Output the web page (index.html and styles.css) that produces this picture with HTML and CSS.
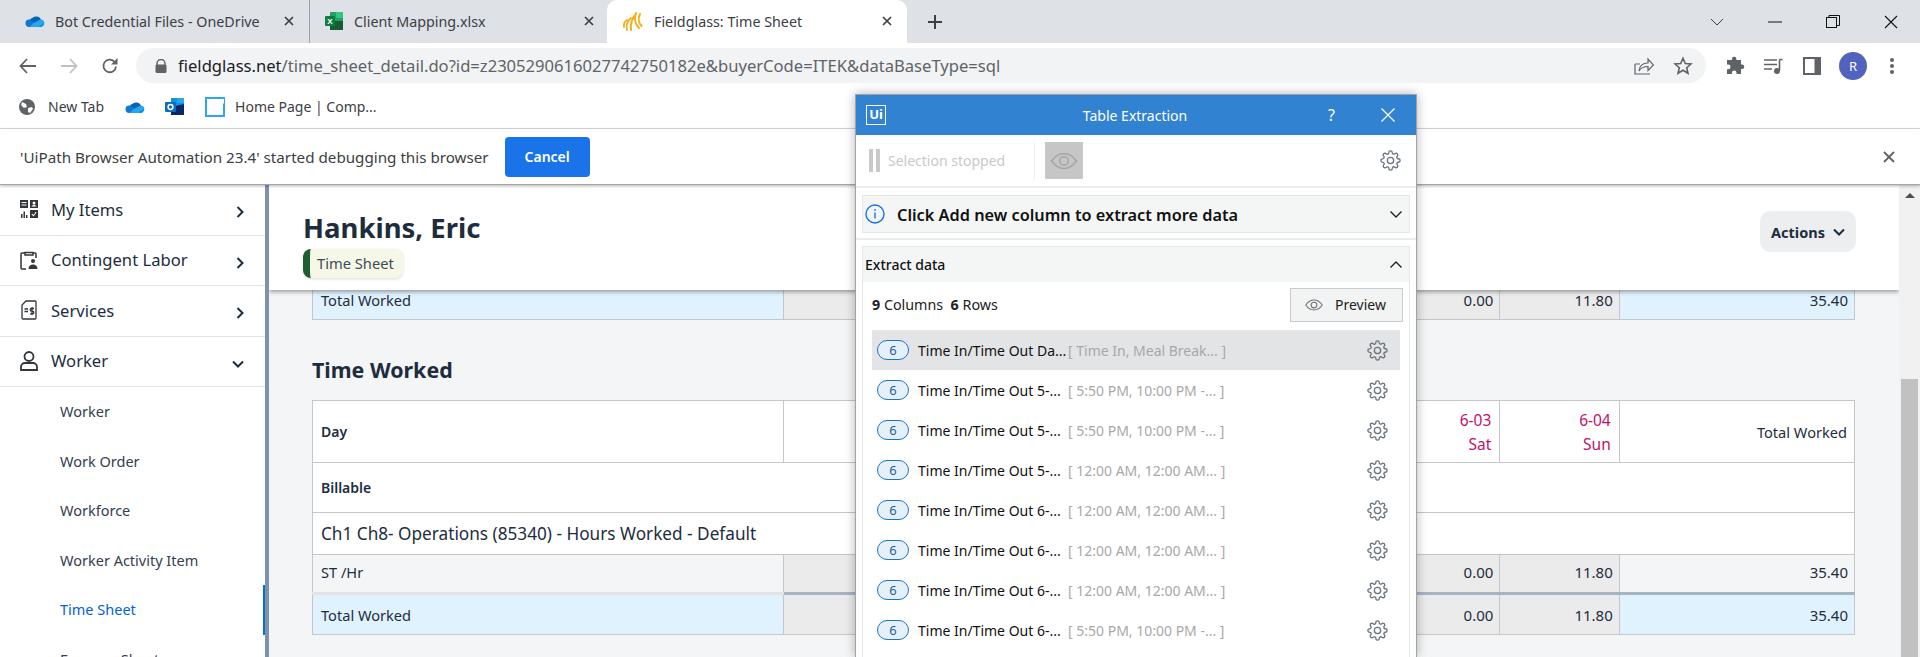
FILE: index.html
```html
<!DOCTYPE html>
<html lang="en">
<head>
    <meta charset="UTF-8">
    <meta name="viewport" content="width=device-width, initial-scale=1.0">
    <title>Fieldglass: Time Sheet</title>
    <link rel="stylesheet" href="styles.css">
</head>
<body>
    <svg class="sprite" width="0" height="0">
        <symbol id="gear" viewBox="0 0 24 24">
            <circle cx="12" cy="12" r="3.6" fill="none" stroke="currentColor" stroke-width="1.5"/>
            <path fill="none" stroke="currentColor" stroke-width="1.5" d="M19.4 15a1.65 1.65 0 0 0 .33 1.82l.06.06a2 2 0 0 1 0 2.83 2 2 0 0 1-2.83 0l-.06-.06a1.65 1.65 0 0 0-1.82-.33 1.65 1.65 0 0 0-1 1.51V21a2 2 0 0 1-2 2 2 2 0 0 1-2-2v-.09A1.65 1.65 0 0 0 9 19.4a1.65 1.65 0 0 0-1.82.33l-.06.06a2 2 0 0 1-2.83 0 2 2 0 0 1 0-2.83l.06-.06a1.65 1.65 0 0 0 .33-1.82 1.65 1.65 0 0 0-1.51-1H3a2 2 0 0 1-2-2 2 2 0 0 1 2-2h.09A1.65 1.65 0 0 0 4.6 9a1.65 1.65 0 0 0-.33-1.82l-.06-.06a2 2 0 0 1 0-2.83 2 2 0 0 1 2.83 0l.06.06a1.65 1.65 0 0 0 1.82.33H9a1.65 1.65 0 0 0 1-1.51V3a2 2 0 0 1 2-2 2 2 0 0 1 2 2v.09a1.65 1.65 0 0 0 1 1.51 1.65 1.65 0 0 0 1.82-.33l.06-.06a2 2 0 0 1 2.83 0 2 2 0 0 1 0 2.83l-.06.06a1.65 1.65 0 0 0-.33 1.82V9a1.65 1.65 0 0 0 1.51 1H21a2 2 0 0 1 2 2 2 2 0 0 1-2 2h-.09a1.65 1.65 0 0 0-1.51 1z"/>
        </symbol>
        <symbol id="eye" viewBox="0 0 24 16">
            <path fill="none" stroke="currentColor" stroke-width="1.4" d="M1 8c3-4.4 6.800-6.600 11-6.600S20 3.600 23 8c-3 4.400-6.800 6.600-11 6.600S4 12.400 1 8z"/>
            <circle cx="12" cy="8" r="3.800" fill="none" stroke="currentColor" stroke-width="1.4"/>
        </symbol>
        <symbol id="cloud" viewBox="0 0 20 14">
            <path fill="#0364b8" d="M7.700 3.800A5.200 5.200 0 0 1 16 5.600L9 9.500 4.500 6.800a4 4 0 0 1 3.200-3z"/>
            <path fill="#0f78d4" d="M4.500 5.500l5 3 3.500 4.500H4a3.800 3.800 0 0 1-.5-7.500z"/>
            <path fill="#1490df" d="M15.700 5.400A3.900 3.900 0 0 1 16.500 13H9.500L8 10.500l7.700-5.100z"/>
            <path fill="#28a8ea" d="M8.500 9.200l7-3.400c1.800.2 3.200 1 4 2.700L13 13H4.500z"/>
        </symbol>
        <symbol id="tab-x" viewBox="0 0 10 10">
            <path d="M1 1l8 8M9 1L1 9" stroke="#3c4043" stroke-width="1.700"/>
        </symbol>
    </svg>

    <div class="tabstrip">
        <div class="tab tab-first">
            <svg class="favicon" width="20" height="14"><use href="#cloud"/></svg>
            <span class="tab-title">Bot Credential Files - OneDrive</span>
            <svg width="10" height="10"><use href="#tab-x"/></svg>
        </div>
        <div class="tab tab-second">
            <svg class="favicon" width="20" height="20" viewBox="0 0 20 20">
                <rect x="6" y="1" width="13" height="18" rx="1" fill="#21a366"/>
                <rect x="12" y="1" width="7" height="6" fill="#33c481"/>
                <rect x="6" y="10" width="13" height="9" fill="#185c37"/>
                <rect x="1" y="5" width="10" height="10" rx="1" fill="#107c41"/>
                <text x="3.200" y="13" class="xl-mark">X</text>
            </svg>
            <span class="tab-title">Client Mapping.xlsx</span>
            <svg width="10" height="10"><use href="#tab-x"/></svg>
        </div>
        <div class="tab tab-active">
            <svg class="favicon" width="22" height="22" viewBox="0 0 22 22" fill="none" stroke="#f5ae17" stroke-linecap="round">
                <path stroke-width="1.800" d="M2 17c-.5-3 .5-5.500 3-7M5 20c-1-4 .5-9 4-12"/>
                <path stroke-width="2" d="M9 20C8 15 10 8 14 4M14 3c-2 5-1 11 3 15M18 4c-2 4-1.500 9 1.500 12"/>
            </svg>
            <span class="tab-title">Fieldglass: Time Sheet</span>
            <svg width="10" height="10"><use href="#tab-x"/></svg>
        </div>
        <svg class="newtab" width="16" height="16" viewBox="0 0 16 16"><path d="M8 1v14M1 8h14" stroke="#3c4043" stroke-width="2"/></svg>
        <div class="window-controls">
            <svg width="14" height="8" viewBox="0 0 14 8"><path d="M1 1l6 6 6-6" fill="none" stroke="#3c4043"/></svg>
            <svg width="14" height="2" viewBox="0 0 14 2"><path d="M0 1h14" stroke="#111" stroke-width="1"/></svg>
            <svg width="14" height="14" viewBox="0 0 14 14" fill="none" stroke="#111"><rect x="0.500" y="2.500" width="10" height="10"/><path d="M3 2.500V.5h10.500v10h-3"/></svg>
            <svg width="14" height="14" viewBox="0 0 14 14"><path d="M1 1l12 12M13 1L1 13" stroke="#111" stroke-width="1.100"/></svg>
        </div>
    </div>

    <div class="toolbar">
        <svg class="nav-icon" width="18" height="16" viewBox="0 0 18 16"><path d="M8 1L1.500 8 8 15M2 8h15" fill="none" stroke="#5f6368" stroke-width="1.800"/></svg>
        <svg class="nav-icon" width="18" height="16" viewBox="0 0 18 16"><path d="M10 1l6.500 7L10 15M16 8H1" fill="none" stroke="#bdc1c6" stroke-width="1.800"/></svg>
        <svg class="nav-icon" width="18" height="18" viewBox="0 0 18 18"><path d="M15 9.500a6.300 6.300 0 1 1-1.800-5" fill="none" stroke="#5f6368" stroke-width="1.800"/><path d="M16.500 1v6.500H10z" fill="#5f6368"/></svg>
        <div class="omnibox">
            <svg class="lock" width="12" height="14" viewBox="0 0 12 14"><path d="M2 6V4.500a4 4 0 0 1 8 0V6" fill="none" stroke="#5f6368" stroke-width="1.500"/><rect x="0.500" y="5.500" width="11" height="8.500" rx="1.500" fill="#5f6368"/></svg>
            <span class="url"><b>fieldglass.net</b>/time_sheet_detail.do?id=z2305290616027742750182e&amp;buyerCode=ITEK&amp;dataBaseType=sql</span>
            <svg class="omni-icon" width="20" height="20" viewBox="0 0 20 20" fill="none" stroke="#5f6368" stroke-width="1.200"><path d="M1 8v10h15M1 8h5"/><path d="M5 15c.5-5 4-8 9-8V3l5.500 6-5.500 5.500v-4c-4 0-7 1-9 4.500z"/></svg>
            <svg class="omni-icon" width="20" height="20" viewBox="0 0 20 20"><path d="M10 2.300l2.300 5.200 5.700.5-4.300 3.700 1.300 5.600-5-3-5 3 1.300-5.600L2 8l5.700-.5z" fill="none" stroke="#5f6368" stroke-width="1.600"/></svg>
        </div>
        <svg class="ext-icon" width="20" height="20" viewBox="0 0 20 20"><path d="M7 3a2.200 2.200 0 0 1 4.400 0v1H16v4.500h1a2.300 2.300 0 0 1 0 4.600h-1V18h-4.500v-1.200a2.300 2.300 0 0 0-4.600 0V18H2v-4.800h1.200a2.300 2.300 0 0 0 0-4.600H2V4h5z" fill="#5f6368"/></svg>
        <svg class="ext-icon" width="20" height="16" viewBox="0 0 20 16"><path d="M0 2h13M0 6.500h13M0 11h8" stroke="#5f6368" stroke-width="1.500"/><path d="M15.500 1.500h3M15.500 1.500v11" stroke="#5f6368" stroke-width="1.600" fill="none"/><circle cx="13" cy="13" r="3" fill="#5f6368"/></svg>
        <svg class="ext-icon" width="18" height="18" viewBox="0 0 18 18"><rect width="18" height="18" fill="#5f6368"/><rect x="2" y="2" width="9.500" height="14" fill="#fff"/></svg>
        <span class="avatar">R</span>
        <svg class="menu-icon" width="6" height="18" viewBox="0 0 6 18"><circle cx="3" cy="3" r="2" fill="#5f6368"/><circle cx="3" cy="9" r="2" fill="#5f6368"/><circle cx="3" cy="15" r="2" fill="#5f6368"/></svg>
    </div>

    <div class="bookmarks">
        <svg width="16" height="16" viewBox="0 0 16 16"><circle cx="8" cy="8" r="8" fill="#5f6368"/><path d="M3 3l4 2 1 3-3 1-3-3zM9 9l4-1 1 2-3 4-2-1z" fill="#fff"/></svg>
        <span class="bm-label">New Tab</span>
        <svg class="bm-icon" width="20" height="14"><use href="#cloud"/></svg>
        <svg class="bm-icon" width="20" height="18" viewBox="0 0 20 18">
            <rect x="6" y="0" width="13" height="17" fill="#1490df"/>
            <rect x="12" y="0" width="7" height="5" fill="#28a8ea"/>
            <path d="M6 9l13-3v11H6z" fill="#0a2767"/>
            <rect x="0" y="4" width="11" height="10" rx="1" fill="#0f6cbd"/>
            <circle cx="5.500" cy="9" r="2.400" fill="none" stroke="#fff" stroke-width="1.500"/>
        </svg>
        <svg class="bm-icon" width="20" height="20" viewBox="0 0 20 20"><path d="M1 1h18v18H1z" fill="#fff" stroke="#29a8ea" stroke-width="2"/><path d="M14 2l5 0v5z" fill="#fff"/></svg>
        <span class="bm-label bm-home">Home Page | Comp...</span>
    </div>

    <div class="infobar">
        <span class="info-text">'UiPath Browser Automation 23.4' started debugging this browser</span>
        <button class="cancel-btn">Cancel</button>
        <svg class="info-close" width="12" height="12" viewBox="0 0 12 12"><path d="M1 1l10 10M11 1L1 11" stroke="#5f6368" stroke-width="1.800"/></svg>
    </div>

    <div class="app">
        <nav class="sidebar">
            <div class="nav-item">
                <svg class="nav-glyph" width="18" height="18" viewBox="0 0 18 18" fill="#32363a">
                    <path d="M0 0h8v8H0zM1.500 2v1h5V2zm0 2.500v1h5v-1zM10 0h8v8h-8zm4 1.500a1.500 1.500 0 1 0 0 3 1.500 1.500 0 0 0 0-3zM11.500 6.500h5C16.200 5.500 15.200 5 14 5s-2.200.5-2.500 1.500zM1 14h1.500v4H1zM3.500 11.500H5V18H3.500zM6 15h1.500v3H6zM10 10h8v8h-8zm5.800 1.800L13.500 15l-1.300-1.200-.7.800 2 1.900 3-4z"/>
                </svg>
                <span class="nav-label">My Items</span>
                <svg class="chev" width="8" height="12" viewBox="0 0 8 12"><path d="M1.500 1l5 5-5 5" fill="none" stroke="#1d2d3e" stroke-width="2"/></svg>
            </div>
            <div class="nav-item">
                <svg class="nav-glyph" width="18" height="20" viewBox="0 0 18 20" fill="none" stroke="#32363a" stroke-width="1.500">
                    <path d="M5 3H2a1 1 0 0 0-1 1v14a1 1 0 0 0 1 1h4M13 3h2a1 1 0 0 1 1 1v4M5 2.500h8V5H5z"/>
                    <circle cx="13" cy="11" r="2" fill="#32363a" stroke="none"/>
                    <path d="M8.500 19c0-3 2-4.500 4.500-4.500s4.500 1.500 4.500 4.500z" fill="#32363a" stroke="none"/>
                </svg>
                <span class="nav-label">Contingent Labor</span>
                <svg class="chev" width="8" height="12" viewBox="0 0 8 12"><path d="M1.500 1l5 5-5 5" fill="none" stroke="#1d2d3e" stroke-width="2"/></svg>
            </div>
            <div class="nav-item">
                <svg class="nav-glyph" width="16" height="20" viewBox="0 0 16 20" fill="none" stroke="#32363a" stroke-width="1.300">
                    <path d="M5 1h9a1 1 0 0 1 1 1v16a1 1 0 0 1-1 1H2a1 1 0 0 1-1-1V5z"/>
                    <path d="M3.500 9h3.500M3.500 11.500h3.500M11 7v8M13 8.500h-2.500a1.300 1.300 0 0 0 0 2.700h1a1.300 1.300 0 0 1 0 2.600H9"/>
                </svg>
                <span class="nav-label">Services</span>
                <svg class="chev" width="8" height="12" viewBox="0 0 8 12"><path d="M1.500 1l5 5-5 5" fill="none" stroke="#1d2d3e" stroke-width="2"/></svg>
            </div>
            <div class="nav-item">
                <svg class="nav-glyph" width="18" height="20" viewBox="0 0 18 20" fill="none" stroke="#32363a" stroke-width="1.800">
                    <circle cx="9" cy="5.500" r="4.500"/>
                    <path d="M1 19v-3a4 4 0 0 1 4-4h8a4 4 0 0 1 4 4v3z"/>
                </svg>
                <span class="nav-label">Worker</span>
                <svg class="chev-down" width="12" height="8" viewBox="0 0 12 8"><path d="M1 1.500l5 5 5-5" fill="none" stroke="#1d2d3e" stroke-width="2"/></svg>
            </div>
            <a class="sub-item">Worker</a>
            <a class="sub-item">Work Order</a>
            <a class="sub-item">Workforce</a>
            <a class="sub-item">Worker Activity Item</a>
            <a class="sub-item active">Time Sheet</a>
            <a class="sub-item">Expense Sheet</a>
        </nav>

        <main class="main">
            <header class="page-header">
                <div>
                    <h1>Hankins, Eric</h1>
                    <span class="chip">Time Sheet</span>
                </div>
                <button class="actions-btn">Actions
                    <svg width="12" height="8" viewBox="0 0 12 8"><path d="M1 1.500l5 5 5-5" fill="none" stroke="#1d2d3e" stroke-width="2"/></svg>
                </button>
            </header>

            <div class="content">
                <table class="grid">
                    <colgroup><col class="col-label"><col class="col-day"><col class="col-day"><col class="col-day"><col class="col-day"><col class="col-day"><col class="col-day"><col class="col-day"><col></colgroup>
                    <tr class="row-clipped">
                        <td class="label blue">Total Worked</td>
                        <td class="grey"></td><td class="grey"></td><td class="grey"></td><td class="grey"></td><td class="grey"></td>
                        <td class="grey num">0.00</td><td class="grey num">11.80</td><td class="blue num">35.40</td>
                    </tr>
                </table>

                <h2>Time Worked</h2>

                <table class="grid">
                    <colgroup><col class="col-label"><col class="col-day"><col class="col-day"><col class="col-day"><col class="col-day"><col class="col-day"><col class="col-day"><col class="col-day"><col></colgroup>
                    <tr class="row-day">
                        <th class="label">Day</th>
                        <td></td><td></td><td></td><td></td><td></td>
                        <td class="date">6-03<br>Sat</td>
                        <td class="date">6-04<br>Sun</td>
                        <td class="total-head">Total Worked</td>
                    </tr>
                    <tr class="row-section"><th class="label" colspan="9">Billable</th></tr>
                    <tr class="row-task"><td class="label task" colspan="9">Ch1 Ch8- Operations (85340) - Hours Worked - Default</td></tr>
                    <tr class="row-st">
                        <td class="label plain">ST /Hr</td>
                        <td class="grey"></td><td class="grey"></td><td class="grey"></td><td class="grey"></td><td class="grey"></td>
                        <td class="grey num">0.00</td><td class="grey num">11.80</td><td class="plain num">35.40</td>
                    </tr>
                    <tr class="row-total">
                        <td class="label blue">Total Worked</td>
                        <td class="grey"></td><td class="grey"></td><td class="grey"></td><td class="grey"></td><td class="grey"></td>
                        <td class="grey num">0.00</td><td class="grey num">11.80</td><td class="blue num">35.40</td>
                    </tr>
                </table>
            </div>
        </main>

        <div class="scrollbar">
            <span class="scroll-up"></span>
            <span class="scroll-thumb"></span>
        </div>
    </div>

    <section class="dialog">
        <div class="dialog-title">
            <span class="ui-logo">Ui</span>
            <span class="dialog-name">Table Extraction</span>
            <span class="dialog-help">?</span>
            <svg class="dialog-x" width="14" height="14" viewBox="0 0 14 14"><path d="M.5.500l13 13M13.500.500l-13 13" stroke="#fff" stroke-width="1.200"/></svg>
        </div>
        <div class="dialog-tools">
            <span class="pause"></span>
            <span class="stopped">Selection stopped</span>
            <span class="eye-box"><svg width="28" height="18"><use href="#eye"/></svg></span>
            <svg class="gear tools-gear" width="21" height="21"><use href="#gear"/></svg>
        </div>
        <div class="hint-wrap">
            <div class="hint">
                <svg width="20" height="20" viewBox="0 0 20 20"><circle cx="10" cy="10" r="9" fill="none" stroke="#1a73e8" stroke-width="1.400"/><path d="M10 8.500v6M10 5v1.800" stroke="#1a73e8" stroke-width="1.400"/></svg>
                <span class="hint-text">Click Add new column to extract more data</span>
                <svg class="dlg-chev" width="12" height="7" viewBox="0 0 12 7"><path d="M.5.500L6 6 11.500.500" fill="none" stroke="#222" stroke-width="1.400"/></svg>
            </div>
        </div>
        <div class="extract">
            <div class="extract-head">
                <span>Extract data</span>
                <svg class="dlg-chev" width="12" height="7" viewBox="0 0 12 7"><path d="M.5 6.500L6 1l5.500 5.500" fill="none" stroke="#222" stroke-width="1.400"/></svg>
            </div>
            <div class="summary">
                <span><b>9</b> Columns&nbsp; <b>6</b> Rows</span>
                <button class="preview-btn"><svg width="18" height="12"><use href="#eye"/></svg> Preview</button>
            </div>
            <ul class="columns">
                <li class="selected"><span class="badge">6</span><span class="col-name">Time In/Time Out Da...</span><span class="col-values">[ Time In, Meal Break... ]</span><svg class="gear" width="21" height="21"><use href="#gear"/></svg></li>
                <li><span class="badge">6</span><span class="col-name">Time In/Time Out 5-...</span><span class="col-values">[ 5:50 PM, 10:00 PM -... ]</span><svg class="gear" width="21" height="21"><use href="#gear"/></svg></li>
                <li><span class="badge">6</span><span class="col-name">Time In/Time Out 5-...</span><span class="col-values">[ 5:50 PM, 10:00 PM -... ]</span><svg class="gear" width="21" height="21"><use href="#gear"/></svg></li>
                <li><span class="badge">6</span><span class="col-name">Time In/Time Out 5-...</span><span class="col-values">[ 12:00 AM, 12:00 AM... ]</span><svg class="gear" width="21" height="21"><use href="#gear"/></svg></li>
                <li><span class="badge">6</span><span class="col-name">Time In/Time Out 6-...</span><span class="col-values">[ 12:00 AM, 12:00 AM... ]</span><svg class="gear" width="21" height="21"><use href="#gear"/></svg></li>
                <li><span class="badge">6</span><span class="col-name">Time In/Time Out 6-...</span><span class="col-values">[ 12:00 AM, 12:00 AM... ]</span><svg class="gear" width="21" height="21"><use href="#gear"/></svg></li>
                <li><span class="badge">6</span><span class="col-name">Time In/Time Out 6-...</span><span class="col-values">[ 12:00 AM, 12:00 AM... ]</span><svg class="gear" width="21" height="21"><use href="#gear"/></svg></li>
                <li><span class="badge">6</span><span class="col-name">Time In/Time Out 6-...</span><span class="col-values">[ 5:50 PM, 10:00 PM -... ]</span><svg class="gear" width="21" height="21"><use href="#gear"/></svg></li>
            </ul>
        </div>
    </section>
</body>
</html>
```

FILE: styles.css
```css
* {
    box-sizing: border-box;
}
html, body {
    margin: 0;
    height: 657px;
    overflow: hidden;
}
body {
    position: relative;
    font-family: "Noto Sans", Arial, sans-serif;
    color: #202124;
    background: #fff;
}
.sprite {
    position: absolute;
}

/* browser chrome */
.tabstrip {
    display: flex;
    align-items: center;
    height: 43px;
    background: #dee1e6;
}
.tab {
    display: flex;
    align-items: center;
    height: 43px;
    padding-bottom: 1px;
    font-size: 14.3px;
    color: #3c4043;
}
.tab-first {
    width: 310px;
    padding-left: 25px;
    padding-right: 15px;
    border-right: 1px solid #9aa0a6;
    background-clip: padding-box;
}
.tab-second {
    width: 297px;
    padding-left: 14px;
    padding-right: 13px;
}
.tab-active {
    width: 300px;
    padding-left: 15px;
    padding-right: 15px;
    background: #fff;
    border-radius: 10px 10px 0 0;
}
.favicon {
    flex: none;
    margin-right: 10px;
}
.tab-title {
    flex: 1;
    white-space: nowrap;
}
.xl-mark {
    font: bold 8px "Liberation Sans", sans-serif;
    fill: #fff;
}
.newtab {
    margin-left: 20px;
}
.window-controls {
    display: flex;
    align-items: center;
    gap: 44px;
    margin-left: auto;
    padding-right: 22px;
}
.toolbar {
    display: flex;
    align-items: center;
    height: 49px;
    padding-left: 19px;
    padding-bottom: 4px;
    background: #fff;
}
.nav-icon {
    margin-right: 23px;
}
.omnibox {
    display: flex;
    align-items: center;
    width: 1570px;
    height: 35px;
    margin-left: -6px;
    padding: 0 13px 0 19px;
    border-radius: 18px;
    background: #f1f3f4;
}
.url {
    flex: 1;
    margin-left: 11px;
    font-size: 16.6px;
    white-space: nowrap;
    color: #5f6368;
}
.url b {
    font-weight: 400;
    color: #202124;
}
.omni-icon {
    margin-left: 19px;
}
.ext-icon {
    margin-left: 19px;
}
.avatar {
    display: flex;
    align-items: center;
    justify-content: center;
    width: 28px;
    height: 28px;
    margin-left: 18px;
    border-radius: 50%;
    background: #5262bf;
    color: #fff;
    font-size: 13px;
}
.menu-icon {
    margin-left: 22px;
}
.bookmarks {
    display: flex;
    align-items: center;
    height: 37px;
    padding-left: 19px;
    padding-bottom: 7px;
    border-bottom: 1px solid #d6d8da;
    background: #fff;
}
.bm-label {
    margin-left: 13px;
    font-size: 14px;
    color: #3c4043;
}
.bm-icon {
    margin-left: 20px;
}
.bm-label + .bm-icon {
    margin-left: 21px;
}
.bm-home {
    margin-left: 10px;
}
.infobar {
    position: relative;
    z-index: 3;
    display: flex;
    align-items: center;
    height: 56px;
    padding: 0 20px;
    border-bottom: 1px solid #a6a6a6;
    background: #fff;
    box-shadow: 0 1px 3px rgba(0, 0, 0, .3);
}
.info-text {
    font-size: 15.2px;
    color: #3c4043;
}
.cancel-btn {
    width: 85px;
    height: 40px;
    margin-left: 16px;
    border: 0;
    border-radius: 4px;
    background: #1a73e8;
    color: #fff;
    font: 600 14px "Noto Sans", sans-serif;
}
.info-close {
    margin-left: auto;
    margin-right: 5px;
}

/* app */
.app {
    display: flex;
    height: 472px;
}
.sidebar {
    flex: none;
    width: 269px;
    overflow: hidden;
    border-right: 4px solid #7c93ab;
    background: #fff;
}
.nav-item {
    display: flex;
    align-items: center;
    height: 50.500px;
    padding: 0 21px 1px 19px;
    border-bottom: 1px solid #e2e4e6;
    color: #1d2d3e;
    font-size: 16.6px;
}
.nav-glyph {
    flex: none;
    width: 20px;
}
.nav-label {
    flex: 1;
    margin-left: 12px;
}
.chev, .chev-down {
    margin-top: 6px;
}
.sub-item {
    display: block;
    height: 49.600px;
    padding-left: 60px;
    line-height: 49px;
    font-size: 14.5px;
    color: #32404f;
}
.sub-item.active {
    color: #0064d9;
    border-right: 2.500px solid #0a6ed1;
}

.main {
    position: relative;
    flex: 1;
    overflow: hidden;
    background: #f4f5f6;
}
.page-header {
    position: relative;
    z-index: 2;
    display: flex;
    justify-content: space-between;
    align-items: flex-start;
    height: 105px;
    padding: 26px 43px 0 34px;
    background: #fff;
    box-shadow: 0 2px 4px rgba(0, 0, 0, .35);
}
h1 {
    margin: 0 0 4px;
    font-size: 27.5px;
    line-height: 34px;
    font-weight: 700;
    color: #1d2d3e;
}
.chip {
    display: block;
    width: 100px;
    height: 29px;
    padding-left: 7px;
    border-left: 7px solid #1d5e33;
    border-radius: 8px;
    background: #f5f8e6;
    box-shadow: 0 1px 3px rgba(0, 0, 0, .15);
    font-size: 14.7px;
    line-height: 29px;
    white-space: nowrap;
    color: #3f4a55;
}
.actions-btn {
    display: flex;
    align-items: center;
    justify-content: center;
    gap: 8px;
    width: 96px;
    height: 41px;
    border: 0;
    border-radius: 10px;
    background: #eceef0;
    color: #1d2d3e;
    font: 700 14.5px "Noto Sans", sans-serif;
}
.content {
    padding: 0 44px 0 43px;
}
h2 {
    margin: 0;
    padding: 33px 0 14px;
    font-size: 21.4px;
    line-height: 33px;
    font-weight: 700;
    color: #1d2d3e;
}
.grid {
    width: 1543px;
    border-collapse: collapse;
    table-layout: fixed;
    font-size: 14.6px;
    color: #1d2d3e;
}
.col-label {
    width: 471px;
}
.col-day {
    width: 119.400px;
}
.grid td, .grid th {
    padding: 0 8px;
    border: 1px solid #c4c6c8;
    background: #fff;
    font-weight: 400;
    text-align: left;
}
.grid th {
    font-weight: 600;
    font-size: 14px;
}
.grid .grey {
    background: #ebebeb;
}
.grid .blue {
    background: #e0f2fe;
}
.grid .plain {
    background: #f4f5f6;
}
.grid .num {
    padding-right: 6px;
    text-align: right;
    font-size: 15px;
}
.grid .date {
    padding-right: 8px;
    text-align: right;
    font-size: 15.5px;
    line-height: 24px;
    color: #c0116b;
}
.grid .total-head {
    padding-right: 7px;
    text-align: right;
}
.grid .task {
    font-size: 17.2px;
}
.row-clipped {
    height: 28px;
}
.grid .row-clipped td {
    padding-bottom: 9px;
    border-top: 0;
}
.row-day {
    height: 62px;
}
.row-section {
    height: 50px;
}
.row-task {
    height: 42px;
}
.row-st {
    height: 39px;
}
.grid .row-st td {
    padding-top: 7px;
    border-bottom: 3px solid #a6b3c2;
    vertical-align: top;
}
.grid .row-st .label {
    border-bottom-color: #e2e4e6;
}
.row-total {
    height: 41px;
}

.scrollbar {
    position: relative;
    flex: none;
    width: 21px;
    background: #f1f1f1;
}
.scroll-up {
    position: absolute;
    top: 8px;
    left: 6px;
    border: 5px solid transparent;
    border-top: 0;
    border-bottom: 5px solid #505050;
}
.scroll-thumb {
    position: absolute;
    top: 194px;
    left: 2px;
    right: 2px;
    bottom: 0;
    background: #c1c1c1;
}

/* floating extraction window */
.dialog {
    position: absolute;
    top: 94px;
    left: 855px;
    width: 562px;
    height: 563px;
    overflow: hidden;
    z-index: 5;
    border: 1px solid #a2a2a2;
    border-bottom: 0;
    background: #fff;
    box-shadow: 0 0 10px rgba(0, 0, 0, .3);
}
.dialog-title {
    display: flex;
    align-items: center;
    height: 40px;
    padding: 0 21px 0 10px;
    background: #3282d2;
    color: #fff;
    font-size: 14px;
}
.ui-logo {
    width: 20px;
    height: 20px;
    border: 1.500px solid #fff;
    font-size: 13px;
    font-weight: 700;
    line-height: 17px;
    text-align: center;
}
.dialog-name {
    flex: 1;
    margin-left: 56px;
    text-align: center;
}
.dialog-help {
    margin-right: 46px;
    font-size: 16px;
}
.dialog-tools {
    display: flex;
    align-items: center;
    height: 53px;
    padding: 0 15px 0 13px;
    border-bottom: 2px solid #ececec;
}
.pause {
    width: 11px;
    height: 23px;
    border-left: 4px solid #c9c9c9;
    border-right: 4px solid #c9c9c9;
}
.stopped {
    width: 147px;
    margin-left: 8px;
    border-right: 1px solid #f0f0f0;
    line-height: 38px;
    font-size: 14px;
    white-space: nowrap;
    color: #c9c9c9;
}
.eye-box {
    display: flex;
    align-items: center;
    justify-content: center;
    width: 38px;
    height: 37px;
    margin-left: 10px;
    background: #c6c6c6;
    color: #a6a6a6;
}
.tools-gear {
    margin-left: auto;
}
.gear {
    flex: none;
    color: #6a737b;
}
.hint-wrap {
    padding: 7px 6px 5px;
    border-bottom: 2px solid #ececec;
}
.hint {
    display: flex;
    align-items: center;
    height: 38px;
    padding: 0 6px 0 2px;
    border: 1px solid #e6e8e8;
    background: #f4f6f6;
    font-size: 16.3px;
    font-weight: 600;
    color: #111;
}
.hint-text {
    flex: 1;
    margin-left: 12px;
    padding-top: 1px;
    white-space: nowrap;
}
.dlg-chev {
    margin-right: 1px;
}
.extract {
    margin: 6px 6px 0;
    border: 1px solid #e6e8e8;
}
.extract-head {
    display: flex;
    justify-content: space-between;
    align-items: center;
    height: 35px;
    padding: 0 6px 0 2px;
    background: #f4f6f6;
    font-size: 14px;
    font-weight: 500;
    color: #111;
}
.summary {
    display: flex;
    justify-content: space-between;
    align-items: center;
    height: 48px;
    padding: 0 6px 3px 9px;
    font-size: 14.3px;
    color: #222;
}
.preview-btn {
    display: flex;
    align-items: center;
    gap: 12px;
    width: 113px;
    height: 34px;
    padding-left: 14px;
    border: 1px solid #c9cccf;
    background: #f2f3f3;
    color: #222;
    font: 14px "Noto Sans", sans-serif;
}
.preview-btn svg {
    color: #6a737b;
}
.columns {
    margin: 0;
    padding: 0 9px 30px;
    list-style: none;
}
.columns li {
    display: flex;
    align-items: center;
    height: 40px;
    padding: 0 12px 0 5px;
    font-size: 14px;
    color: #111;
    white-space: nowrap;
}
.columns li.selected {
    background: #e3e4e6;
}
.badge {
    flex: none;
    width: 32px;
    height: 20px;
    border: 1px solid #1a73c8;
    border-radius: 10px;
    background: #e6f0fa;
    color: #1a5f9f;
    font-size: 13px;
    line-height: 18px;
    text-align: center;
}
.col-name {
    width: 150px;
    margin-left: 9px;
}
.col-values {
    flex: 1;
    color: #a8a8a8;
}
```
